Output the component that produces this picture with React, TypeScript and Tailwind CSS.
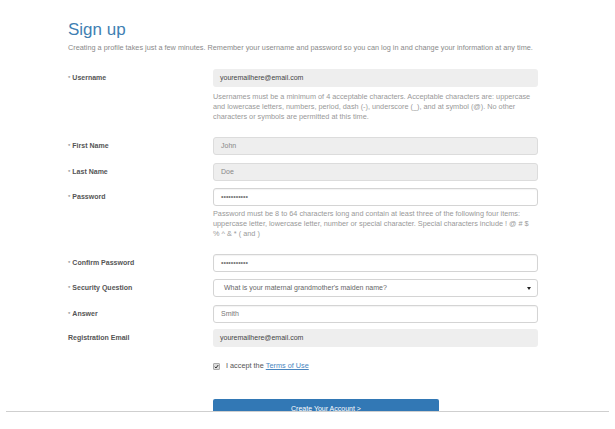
import { ReactNode } from "react"

const Label = ({ text, required = true }: { text: string; required?: boolean }) => (
  <div className="w-[145px] shrink-0 h-[18px] flex items-center text-[7px] font-bold text-[#555]">
    {required && <span className="text-[6px] font-normal text-[#777] mr-[2px]">*</span>}
    {text}
  </div>
)

const Row = ({ label, required, children, className = "" }: { label: string; required?: boolean; children: ReactNode; className?: string }) => (
  <div className={`flex items-start ${className}`}>
    <Label text={label} required={required} />
    <div className="w-[325px]">{children}</div>
  </div>
)

const Field = ({ value, variant }: { value: string; variant: "plain" | "readonly" | "white" }) => {
  const styles = {
    plain: "bg-[#eeeeee] text-[#444]",
    readonly: "bg-[#eeeeee] border border-[#dcdcdc] text-[#888]",
    white: "bg-white border border-[#d4d4d4] text-[#777] shadow-[inset_0_1px_1px_rgba(0,0,0,0.05)]",
  }
  return (
    <div className={`h-[18px] rounded-[3px] px-[7px] flex items-center text-[7px] ${styles[variant]}`}>
      {value}
    </div>
  )
}

const Help = ({ children, className = "" }: { children: ReactNode; className?: string }) => (
  <p className={`text-[7.3px] leading-[10px] text-[#999] ${className}`}>{children}</p>
)

export default function App() {
  return (
    <div className="w-[615px] h-[429px] bg-white overflow-hidden font-['Liberation_Sans',Arial,sans-serif]">
      <div className="h-[411px] overflow-hidden pl-[68px] pt-[20px]">
        <h1 className="text-[17px] leading-[20px] text-[#3f7fb3]">Sign up</h1>
        <p className="mt-[3px] text-[7.3px] leading-[10px] text-[#8a8a8a]">
          Creating a profile takes just a few minutes. Remember your username and password so you can log in and change your information at any time.
        </p>

        <Row label="Username" className="mt-[16px]">
          <Field value="youremailhere@email.com" variant="plain" />
          <Help className="mt-[5px]">
            Usernames must be a minimum of 4 acceptable characters. Acceptable characters are: uppercase and lowercase letters, numbers, period, dash (-), underscore (_), and at symbol (@). No other characters or symbols are permitted at this time.
          </Help>
        </Row>

        <Row label="First Name" className="mt-[15px]">
          <Field value="John" variant="readonly" />
        </Row>
        <Row label="Last Name" className="mt-[8px]">
          <Field value="Doe" variant="readonly" />
        </Row>

        <Row label="Password" className="mt-[7px]">
          <Field value="•••••••••••" variant="white" />
          <Help className="mt-[3px]">
            Password must be 8 to 64 characters long and contain at least three of the following four items: uppercase letter, lowercase letter, number or special character. Special characters include ! @ # $ %&nbsp;^ &amp; * ( and )
          </Help>
        </Row>

        <Row label="Confirm Password" className="mt-[15px]">
          <Field value="•••••••••••" variant="white" />
        </Row>

        <Row label="Security Question" className="mt-[7px]">
          <div className="h-[18px] rounded-[3px] px-[10px] flex items-center justify-between text-[7px] bg-white border border-[#d4d4d4] text-[#666]">
            <span>What is your maternal grandmother's maiden name?</span>
            <svg width="4" height="3" viewBox="0 0 4 3" className="mr-[-4px]">
              <path d="M0 0 L4 0 L2 3 Z" fill="#222" />
            </svg>
          </div>
        </Row>

        <Row label="Answer" className="mt-[8px]">
          <Field value="Smith" variant="white" />
        </Row>

        <Row label="Registration Email" required={false} className="mt-[6px]">
          <Field value="youremailhere@email.com" variant="plain" />
        </Row>

        <div className="mt-[14px] ml-[145px] flex items-center h-[10px] text-[7.3px] text-[#555]">
          <span className="w-[7px] h-[7px] rounded-[1px] bg-[#dcdcdc] border border-[#aaa] flex items-center justify-center mr-[6px]">
            <svg width="5" height="5" viewBox="0 0 10 10">
              <path d="M1.5 5.5 L4 8 L8.5 2" stroke="#333" strokeWidth="2" fill="none" />
            </svg>
          </span>
          I accept the&nbsp;<a className="text-[#4a86c0] underline">Terms of Use</a>
        </div>

        <button className="mt-[28px] ml-[145px] w-[226px] h-[24px] rounded-t-[2px] bg-[#3278b5] text-white text-[7px] flex justify-center pt-[5px]">
          Create Your Account &gt;
        </button>
      </div>
      <div className="mx-[6px] h-px bg-[#cfcfcf]" />
    </div>
  )
}
